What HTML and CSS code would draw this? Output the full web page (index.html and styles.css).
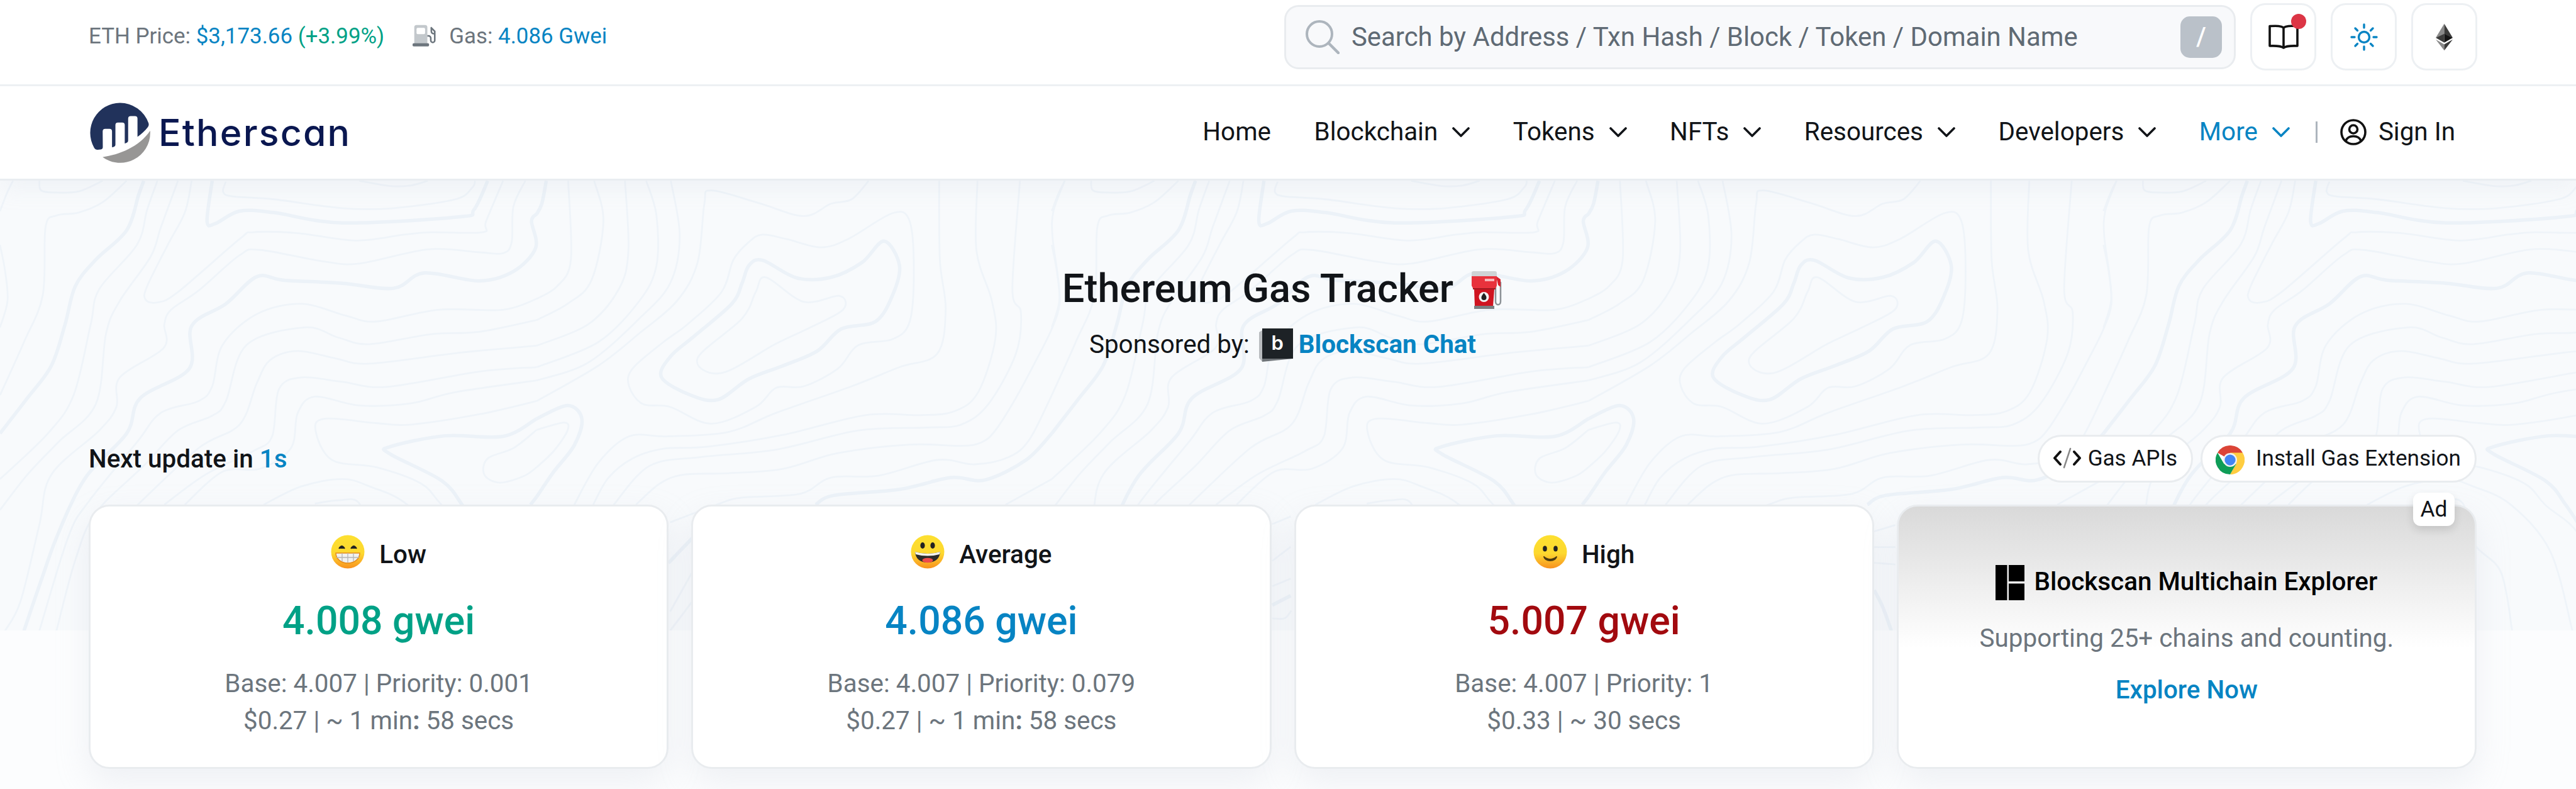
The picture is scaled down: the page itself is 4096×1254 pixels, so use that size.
FILE: index.html
```html
<!DOCTYPE html>
<html lang="en">
<head>
<meta charset="utf-8">
<title>Ethereum Gas Tracker | Etherscan</title>
<link rel="stylesheet" href="styles.css">
</head>
<body>
<svg class="defs" width="0" height="0" aria-hidden="true">
  <defs>
    <linearGradient id="face" x1="0" y1="0" x2="0" y2="1">
      <stop offset="0" stop-color="#fde030"/><stop offset=".55" stop-color="#fdd82f"/><stop offset="1" stop-color="#f8911f"/>
    </linearGradient>
    <symbol id="chevron" viewBox="0 0 28 16"><path d="M2 2l12 12L26 2" fill="none" stroke="currentColor" stroke-width="3.600" stroke-linecap="round" stroke-linejoin="round"/></symbol>
  </defs>
</svg>
<header class="header">
  <div class="topbar">
    <div class="stats">
      <span>ETH Price: <a class="blue">$3,173.66</a> <a class="green">(+3.99%)</a></span>
      <span class="gas">
        <svg class="pump" viewBox="0 0 42 40"><path d="M3 34V5a4 4 0 0 1 4-4h15a4 4 0 0 1 4 4v29z" fill="#c3c8cc"/><rect x="7" y="6" width="15" height="11" rx="2" fill="#fff"/><rect x="0" y="33" width="29" height="5.500" rx="2" fill="#6c757d"/><path d="M26 20h2a4 4 0 0 1 4 4v4a3.500 3.500 0 0 0 7 0V12l-7-7M33 6v6a4 4 0 0 0 5 4" fill="none" stroke="#6c757d" stroke-width="2.800"/></svg>
        <span>Gas: <a class="blue">4.086 Gwei</a></span>
      </span>
    </div>
    <div class="tools">
      <div class="search">
        <svg class="lens" viewBox="0 0 54 54"><circle cx="22" cy="22" r="20" fill="none" stroke="#adb5bd" stroke-width="4"/><path d="M37 37l15 15" stroke="#adb5bd" stroke-width="4.500" stroke-linecap="round"/></svg>
        <span class="placeholder">Search by Address / Txn Hash / Block / Token / Domain Name</span>
        <kbd class="key">/</kbd>
      </div>
      <div class="tool">
        <svg class="book" viewBox="0 0 50 40"><path d="M25 5C21 2 15 2 3 2.500V34c12-.5 18 0 22 3 4-3 10-3.500 22-3V2.500C35 2 29 2 25 5zM25 5v32" fill="none" stroke="#111" stroke-width="3.600" stroke-linejoin="round"/></svg>
        <i class="dot"></i>
      </div>
      <div class="tool">
        <svg class="sun" viewBox="0 0 44 44"><g fill="none" stroke="#0784c3" stroke-width="3.400" stroke-linecap="round"><circle cx="22" cy="22" r="8.500"/><path d="M22 2v5M22 37v5M2 22h5M37 22h5M8 8l3.500 3.500M32.500 32.500L36 36M8 36l3.500-3.500M32.500 11.500L36 8"/></g></svg>
      </div>
      <div class="tool">
        <svg class="eth" viewBox="0 0 28 44"><path d="M14 0L0 23l14-6z" fill="#8a8a8a"/><path d="M14 0l14 23-14-6z" fill="#3c3c3b"/><path d="M0 23l14-6.500V31z" fill="#3c3c3b"/><path d="M28 23l-14-6.500V31z" fill="#141414"/><path d="M0 26l14 8v10z" fill="#8a8a8a"/><path d="M28 26l-14 8v10z" fill="#3c3c3b"/></svg>
      </div>
    </div>
  </div>
  <div class="navbar">
    <div class="brand">
      <svg class="brand-mark" viewBox="0 0 122.300 122.400"><path fill="#21325b" d="M25.790 58.415a5.157 5.157 0 0 1 5.181-5.156l8.590.028a5.164 5.164 0 0 1 5.164 5.163v32.480c.967-.287 2.209-.593 3.568-.913a4.300 4.300 0 0 0 3.317-4.187V45.538a5.165 5.165 0 0 1 5.164-5.165h8.607a5.165 5.165 0 0 1 5.164 5.165v37.393s2.155-.872 4.254-1.758a4.311 4.311 0 0 0 2.632-3.967V32.625a5.164 5.164 0 0 1 5.163-5.164h8.606a5.164 5.164 0 0 1 5.164 5.164v36.710c7.462-5.408 15.024-11.912 21.025-19.733a8.662 8.662 0 0 0 1.319-8.092A60.792 60.792 0 0 0 60.567.686 60.788 60.788 0 0 0 8.577 91.750a7.688 7.688 0 0 0 7.413 3.800c1.675-.147 3.760-.356 6.239-.647a4.298 4.298 0 0 0 3.815-4.268z"/><path fill="#979695" d="M25.602 110.510a60.813 60.813 0 0 0 63.371 5.013 60.815 60.815 0 0 0 33.212-54.203c0-1.400-.065-2.785-.158-4.162-22.219 33.138-63.244 48.630-96.423 53.347"/></svg>
      <span class="brand-name">Etherscan</span>
    </div>
    <nav class="nav">
      <a class="nav-item">Home</a>
      <a class="nav-item">Blockchain<svg class="chev"><use href="#chevron"/></svg></a>
      <a class="nav-item">Tokens<svg class="chev"><use href="#chevron"/></svg></a>
      <a class="nav-item">NFTs<svg class="chev"><use href="#chevron"/></svg></a>
      <a class="nav-item">Resources<svg class="chev"><use href="#chevron"/></svg></a>
      <a class="nav-item">Developers<svg class="chev"><use href="#chevron"/></svg></a>
      <a class="nav-item active">More<svg class="chev"><use href="#chevron"/></svg></a>
      <i class="divider"></i>
      <a class="sign-in">
        <svg class="user" viewBox="0 0 42 42"><g fill="none" stroke="#111" stroke-width="3.600"><circle cx="21" cy="21" r="19"/><circle cx="21" cy="16.500" r="6.500"/><path d="M9 35c2-6 6-7.500 12-7.500S31 29 33 35"/></g></svg>
        Sign In
      </a>
    </nav>
  </div>
</header>
<main class="main">
  <svg class="contours" id="contours" viewBox="0 5 7526.400 1534" preserveAspectRatio="none"></svg>
  <div class="content">
    <h1 class="title">Ethereum Gas Tracker
      <svg class="red-pump" viewBox="0 0 50 60"><path d="M41 12l6 6v30c0 7-8 7-8 0V24" fill="none" stroke="#8d9296" stroke-width="2.500"/><path d="M40 8l7 5v12l-4-3z" fill="#d8212c"/><path d="M1 3q0-3 3-3h34q3 0 3 3v5H1z" fill="#cfd3d5"/><path d="M1 8h40v15l-2 4H3l-2-4z" fill="#e8323c"/><rect x="22" y="12" width="15" height="4" fill="#f7b7ba"/><path d="M3 27h36v2H3z" fill="#a11820"/><path d="M5 29h32l-2 27H6z" fill="#cf1420"/><circle cx="20.500" cy="41" r="8" fill="#f3f3f3"/><path d="M20.500 34.500c3 4 4 5.500 4 7.500a4 4 0 0 1-8 0c0-2 1-3.500 4-7.500z" fill="#222"/><path d="M5 55h32v5H5z" fill="#7b7f82"/></svg>
    </h1>
    <p class="sponsor"><span>Sponsored by:</span>
      <span class="chat-mark"><svg viewBox="0 0 54 53"><path d="M0 6l5-3v50l-5-6z" fill="#b9bcbf"/><path d="M5 47h49v1L5 53z" fill="#6f7478"/><rect x="5" width="49" height="48" fill="#1d2226"/></svg><b>b</b></span>
      <a class="sponsor-link">Blockscan Chat</a>
    </p>
    <div class="toolbar">
      <div class="update">Next update in <span class="blue">1s</span></div>
      <div class="pills">
        <a class="pill"><svg class="code" viewBox="0 0 46 34"><path d="M12 7L3 17l9 10M34 7l9 10-9 10" fill="none" stroke="#111" stroke-width="4" stroke-linecap="round" stroke-linejoin="round"/><path d="M28 2l-10 30" stroke="#888" stroke-width="2.500" stroke-linecap="round"/></svg>Gas APIs</a>
        <a class="pill wide"><svg class="chrome" viewBox="0 0 48 48"><circle cx="24" cy="24" r="24" fill="#fff"/><path d="M24 24L3.200 12A24 24 0 0 1 44.800 12z" fill="#db4437"/><path d="M24 12h20.800A24 24 0 0 1 24 48l10.400-18z" fill="#ffcd40"/><path d="M3.200 12l10.400 18L24 36l0 12A24 24 0 0 1 3.200 12z" fill="#0f9d58"/><path d="M34.400 30L24 48 22 35z" fill="#0f9d58"/><circle cx="24" cy="24" r="11.500" fill="#f1f1f1"/><circle cx="24" cy="24" r="9" fill="#4285f4"/></svg>Install Gas Extension</a>
      </div>
    </div>
    <section class="cards">
      <article class="card">
        <div class="label"><svg class="emoji" viewBox="0 0 54 54"><circle cx="27" cy="27" r="26.500" fill="url(#face)"/><path d="M13 22q4.500-8 9 0M32 22q4.500-8 9 0" fill="#222" stroke="#222" stroke-width="2"/><path d="M8 29h38c0 9-8 16-19 16S8 38 8 29z" fill="#f1f1ef" stroke="#e58a1c" stroke-width="1.500"/><path d="M9 36h36M18 29v13M27 29v15M36 29v13" stroke="#b5b5b5" stroke-width="1.300"/></svg>Low</div>
        <div class="value green">4.008 gwei</div>
        <div class="detail">Base: 4.007 | Priority: 0.001</div>
        <div class="detail">$0.27 | ~ 1 min<b>:</b> 58 secs</div>
      </article>
      <article class="card">
        <div class="label"><svg class="emoji" viewBox="0 0 54 54"><circle cx="27" cy="27" r="26.500" fill="url(#face)"/><ellipse cx="19" cy="17" rx="3.600" ry="5" fill="#222"/><ellipse cx="35" cy="17" rx="3.600" ry="5" fill="#222"/><path d="M7 27q20 6 40 0c-1 12-9 17-20 17S8 39 7 27z" fill="#2b2b2b"/><path d="M7 27q20 6 40 0l-1 4q-19 5-38 0z" fill="#f3f3f0"/><ellipse cx="27" cy="40.500" rx="8.500" ry="3.800" fill="#ee4b4b"/></svg>Average</div>
        <div class="value blue">4.086 gwei</div>
        <div class="detail">Base: 4.007 | Priority: 0.079</div>
        <div class="detail">$0.27 | ~ 1 min<b>:</b> 58 secs</div>
      </article>
      <article class="card">
        <div class="label"><svg class="emoji" viewBox="0 0 54 54"><circle cx="27" cy="27" r="26.500" fill="url(#face)"/><ellipse cx="18.500" cy="22" rx="3.300" ry="4.500" fill="#222"/><ellipse cx="35.500" cy="22" rx="3.300" ry="4.500" fill="#222"/><path d="M17 35q10 8 20 0-2 6-10 6t-10-6z" fill="#4a3a10" stroke="#4a3a10" stroke-width="2" stroke-linejoin="round"/></svg>High</div>
        <div class="value red">5.007 gwei</div>
        <div class="detail">Base: 4.007 | Priority: 1</div>
        <div class="detail">$0.33 | ~ 30 secs</div>
      </article>
      <article class="card promo">
        <span class="ad">Ad</span>
        <div class="promo-title"><svg class="blocks" viewBox="0 0 46 56"><path d="M0 0h18.500v56H0zM21 0h25v26H21zM21 29.500h25V56H21z" fill="#000"/></svg>Blockscan Multichain Explorer</div>
        <div class="promo-text">Supporting 25+ chains and counting.</div>
        <a class="promo-link">Explore Now</a>
      </article>
    </section>
  </div>
</main>
<script src="contours.js"></script>
</body>
</html>
```
FILE: styles.css
```css
* { box-sizing: border-box; }
body { margin: 0; width: 4096px; height: 1254px; overflow: hidden; background: #fcfdfe; font-family: Roboto, "Liberation Sans", sans-serif; font-size: 40.4px; color: #111418; }
.defs { position: absolute; }
svg { display: block; flex: none; }
.blue { color: #0784c3; }
.green { color: #00a186; }
.red { color: #a20a0f; }

.header { position: relative; z-index: 1; background: #fff; border-bottom: 3px solid #e9edf1; box-shadow: 0 14px 34px rgba(189, 197, 209, .13); }
.topbar { height: 137px; padding: 5px 157px 0 141px; display: flex; justify-content: space-between; align-items: flex-start; border-bottom: 3px solid #edf0f3; }
.stats { height: 104px; display: flex; align-items: center; gap: 45px; font-size: 34.9px; color: #6c757d; white-space: nowrap; }
.gas { display: flex; align-items: center; gap: 20px; }
.pump { width: 38px; height: 38px; }
.tools { display: flex; align-items: center; gap: 23px; }
.search { width: 1513px; height: 102px; padding: 0 19px 0 31px; display: flex; align-items: center; background: #f8f9fb; border: 3px solid #e9ecef; border-radius: 23px; color: #5f6a74; }
.lens { width: 54px; height: 54px; }
.placeholder { margin-left: 19px; flex: 1; white-space: nowrap; font-size: 41.9px; }
.key { width: 66px; height: 66px; border-radius: 15px; background: #bac1c9; color: #fff; font: 500 40px/66px Roboto, sans-serif; text-align: center; }
.tool { position: relative; width: 105px; height: 107px; display: flex; align-items: center; justify-content: center; border: 3px solid #edf0f3; border-radius: 24px; background: #fff; }
.book { width: 50px; height: 40px; }
.dot { position: absolute; right: 13px; top: 14px; width: 24px; height: 24px; border-radius: 50%; background: #dc3545; }
.sun { width: 44px; height: 44px; }
.eth { width: 27px; height: 44px; }

.navbar { height: 147px; padding: 0 192px 0 143px; display: flex; justify-content: space-between; align-items: center; }
.brand { display: flex; align-items: center; gap: 13px; }
.brand-mark { width: 96px; height: 96px; }
.brand-name { font: 500 59px/80px Inter, sans-serif; font-feature-settings: "cv11"; letter-spacing: 2.2px; color: #0a1750; }
.nav { display: flex; align-items: center; white-space: nowrap; padding-bottom: 2px; }
.nav-item { display: flex; align-items: center; gap: 23px; margin-right: 68.500px; }
.nav-item.active { color: #0784c3; margin-right: 41px; }
.chev { width: 28px; height: 16px; }
.divider { width: 3px; height: 34px; background: #adb5bd; margin-right: 36px; }
.sign-in { display: flex; align-items: center; gap: 19px; }
.user { width: 42px; height: 42px; }

.main { position: relative; height: 967px; }
.contours { position: absolute; left: 0; top: -3px; width: 4096px; height: 718px; background: #f8fafc; }
.contours path { fill: none; stroke: #eff4f9; stroke-width: 2.8px; vector-effect: non-scaling-stroke; }
.contours path.major { stroke: #ecf2f8; stroke-width: 5.5px; }
.content { position: relative; padding: 136px 158px 0 141px; }
.title { margin: 0; display: flex; justify-content: center; align-items: center; gap: 27px; font-weight: 500; font-size: 63px; line-height: 72px; }
.red-pump { width: 52px; height: 60px; margin-top: 4px; }
.sponsor { margin: 23px 0 0; display: flex; justify-content: center; align-items: center; line-height: 60px; }
.chat-mark { position: relative; width: 54px; height: 53px; margin: 0 9px 0 15px; }
.chat-mark svg { width: 54px; height: 53px; }
.chat-mark b { position: absolute; left: 5px; top: 0; width: 49px; text-align: center; color: #fff; font: 600 31px/46px Inter, sans-serif; }
.sponsor-link { color: #0784c3; font-weight: 700; }
.toolbar { margin-top: 113px; height: 76px; display: flex; justify-content: space-between; align-items: center; }
.update { font-weight: 500; }
.pills { display: flex; gap: 12px; font-size: 35.1px; }
.pill { height: 76px; padding: 0 22px 2px 21px; display: flex; align-items: center; gap: 10px; border: 3px solid #e9ecef; border-radius: 38px; background: #fff; white-space: nowrap; }
.pill.wide { gap: 18px; }
.code { width: 46px; height: 34px; }
.chrome { width: 46px; height: 46px; margin-top: 6px; }

.cards { margin-top: 35px; display: grid; grid-template-columns: repeat(4, 1fr); gap: 36px; }
.card { position: relative; height: 420px; padding: 46px 0 0; border: 3px solid #e9ecef; border-radius: 33px; background: #fff; box-shadow: 0 22px 53px rgba(189, 197, 209, .22); text-align: center; }
.label { height: 60px; display: flex; justify-content: center; align-items: center; gap: 23px; font-weight: 500; }
.emoji { width: 54px; height: 54px; margin-bottom: 8px; }
.value { margin: 36px 0 30px; font-weight: 500; font-size: 62.5px; line-height: 80px; }
.detail { line-height: 59px; color: #6c757d; }
.promo { padding-top: 91px; background: linear-gradient(#d9d9d9, #fff 54%); }
.promo-title { height: 56px; display: flex; justify-content: center; align-items: center; gap: 15px; font-weight: 500; color: #000; }
.blocks { width: 46px; height: 56px; margin-top: 3px; }
.promo-text { margin-top: 34px; line-height: 58px; color: #6c757d; }
.promo-link { display: block; margin-top: 24px; line-height: 58px; font-weight: 500; color: #0784c3; }
.ad { position: absolute; right: 32px; top: -22px; width: 66px; height: 53px; border-radius: 12px; background: #fff; box-shadow: 0 6px 14px rgba(0, 0, 0, .12); font-size: 35.35px; line-height: 53px; }
```
FILE: contours.js
```js
// Topographic lines of one repeating tile. "*" marks a major line, "o" a closed one.
// The tile is drawn in two halves; the right half starts at x = 1568.
const left = [
  " 38,12 20,55 0,115", " 0,230 15,320 22,420 0,510",
  " 370,12 300,85 230,120 165,130 133,170 125,400 70,560 0,740",
  "* 420,12 405,60 370,180 280,280 220,370 190,500 150,640 80,750 0,870",
  " 460,12 430,110 400,230 290,380 265,500 215,740 140,870 0,1025",
  " 520,12 470,170 440,270 350,420 310,530 280,770 170,900 80,1010 0,1130",
  " 560,12 540,120 490,230 430,370 425,415 460,425 520,390 700,210 740,187 870,190 1040,215 1180,195 1260,187 1410,187 1420,150 1470,12",
  "* 620,12 605,150 630,157 700,115 800,120 1000,155 1340,135 1385,110 1425,12",
  " 660,15 652,50 680,65 800,75 1000,105 1150,105 1330,75 1380,35 1388,12",
  " 1050,12 1140,30 1200,28 1250,12", " 115,12 120,45 160,52 230,48 300,12",
  " 1535,12 1500,100 1495,220 1470,258 1400,255 1250,245 1050,293 940,285 760,247 700,265 580,385 500,450 480,500 478,580 350,680 340,780 290,860 150,1010 115,1180 60,1440 15,1540",
  "* 1568,125 1553,150 1565,240 1500,320 1400,352 1240,325 1150,377 1000,360 830,350 750,338 660,430 560,505 553,650 410,750 370,870 250,1020 170,1210 120,1370 70,1540",
  " 1568,413 1470,450 1280,450 1100,490 1010,470 880,430 750,465 650,570 620,710 580,760 470,800 400,900 260,1100 200,1220 115,1540",
  " 1568,485 1400,525 1260,533 1080,567 990,545 890,510 720,570 660,760 620,810 520,860 420,980 280,1140 220,1300 165,1540",
  " 1568,572 1350,595 1080,633 980,615 870,590 790,620 750,700 700,840 580,920 400,1115",
  " 1568,645 1400,660 1130,712 1000,695 880,680 815,720 795,880 740,930 600,1010 480,1112",
  " 1568,690 1330,730 1200,768 1050,775 920,745 870,800 850,920 760,990 650,1000 540,1112",
  " 1568,760 1400,805 1200,840 1100,835 950,820 922,860 970,960 1100,985 1230,1040 1290,1112 1400,1240 1435,1540",
  "* 1568,820 1470,880 1300,878 1140,915 1140,940 1290,1030 1350,1112 1400,1200", "* 1568,1085 1550,1112",
  " 1568,858 1500,920 1425,955 1415,1010 1460,1037 1530,1015 1568,985",
  " 770,1112 880,1050 1000,1025 1080,1050 1190,1112 1305,1270 1370,1540",
  " 920,1108 990,1097 1050,1108 1083,1245 1161,1341 1194,1540",
  " 644,1178 698,1152", " 644,1303 698,1255", " 644,1389 698,1363", "* 644,1453 698,1421", " 644,1498 680,1498 700,1472"
];
const right = [
  " 1543,12 1510,115 1507,200 1522,330 1528,430 1505,515 1460,620 1400,750 1340,860 1300,900 1240,912 1090,908 880,937 720,990 560,1005 430,1010 360,1040 290,1112",
  " 1505,740 1440,890 1380,950 1280,975 1170,960 1000,1013 860,1020 770,1075 600,1088 530,1110 390,1172",
  "* 1505,870 1430,960 1310,1028 1210,1020 1060,1060 870,1080 815,1112",
  " 1505,1025 1370,1112", " 1505,1130 1490,1150",
  "* 28,12 15,90 0,125", " 92,12 100,280 60,370 0,413", " 168,12 195,150 160,350 90,430 0,485",
  " 258,12 268,250 240,380 150,500 0,572", " 320,12 350,130 350,300 300,420 180,560 0,645",
  " 392,12 418,200 390,360 300,480 150,630 0,690",
  " 970,12 920,75 860,90 780,132 650,88 510,45 490,90 470,290 410,420 300,530 180,640 0,760",
  "* 0,820 90,775 132,820 110,910 50,1000 0,1085", " 0,858 80,833 90,860 50,930 0,985",
  "o 660,195 730,210 830,238 910,210 1040,122 1090,150 1102,320 1090,490 1040,550 940,570 880,650 780,710 700,715 640,780 510,837 390,780 310,770 270,710 280,650 370,560 440,500 540,390 575,280 620,220",
  "*o 660,282 760,342 860,340 950,290 1015,217 1060,300 1040,400 990,490 890,515 820,590 720,640 620,685 530,755 450,740 365,680 390,610 460,540 570,430 600,360 620,300",
  "o 670,340 780,423 885,403 895,450 800,510 700,565 540,665 470,615 600,480 640,390",
  " 1176,12 1178,280 1195,450 1170,600 1060,645 920,710 700,800 560,865 380,880 270,880 180,970 110,1112",
  " 1288,12 1285,250 1330,420 1340,550 1290,730 1220,795 1120,808 960,808 720,875 500,915 370,922 280,955 210,1020 165,1112",
  " 1412,12 1390,380 1415,460 1400,600 1320,770 1240,840 1140,850 940,860 700,925 480,950 330,980 225,1112",
  "* 385,1310 455,1225", " 390,1475 455,1340", " 390,1540 455,1440",
  " 831,1204 897,1181", " 831,1256 897,1256", " 831,1309 897,1315", "* 835,1402 860,1460 885,1540"
];

// Smooth curve through the points (Catmull-Rom converted to cubic Bézier segments).
function curve(points, closed) {
  const n = points.length;
  const at = i => closed ? points[(i + n) % n] : points[Math.max(0, Math.min(n - 1, i))];
  let d = "M" + points[0];
  for (let i = 0; i < (closed ? n : n - 1); i++) {
    const [a, b, c, e] = [at(i - 1), at(i), at(i + 1), at(i + 2)];
    d += "C" + [b[0] + (c[0] - a[0]) / 6, b[1] + (c[1] - a[1]) / 6, c[0] - (e[0] - b[0]) / 6, c[1] - (e[1] - b[1]) / 6, c[0], c[1]];
  }
  return d;
}

const svg = document.getElementById("contours");
for (let tile = 0; tile < 3; tile++) {
  [left, right].forEach((lines, half) => lines.forEach(line => {
    const [flags, ...coords] = line.split(" ");
    const points = coords.map(p => p.split(",").map(Number)).map(([x, y]) => [x + half * 1568 + tile * 3073, y]);
    const path = document.createElementNS("http://www.w3.org/2000/svg", "path");
    path.setAttribute("d", curve(points, flags.includes("o")));
    if (flags.includes("*")) path.setAttribute("class", "major");
    svg.appendChild(path);
  }));
}
```
